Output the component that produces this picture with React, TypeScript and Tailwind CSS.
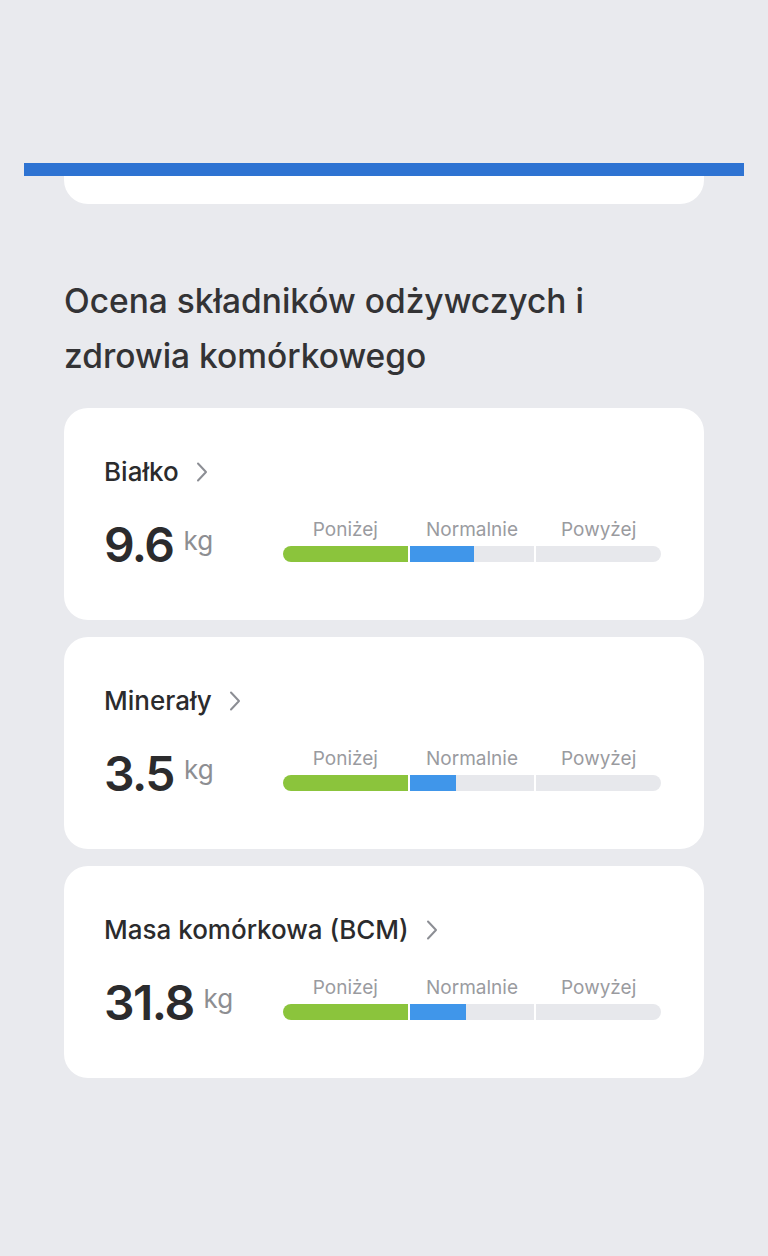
type Metric = {
  name: string;
  value: string;
  unit: string;
  fill: number; // share of the "normal" segment filled, 0-100
};

const metrics: Metric[] = [
  { name: "Białko", value: "9.6", unit: "kg", fill: 52 },
  { name: "Minerały", value: "3.5", unit: "kg", fill: 37 },
  { name: "Masa komórkowa (BCM)", value: "31.8", unit: "kg", fill: 45 },
];

function Chevron() {
  return (
    <svg width="12" height="20" viewBox="0 0 12 20" fill="none" className="shrink-0">
      <path
        d="M2 1.5 10 10 2 18.5"
        stroke="#8c8e94"
        strokeWidth="2"
        strokeLinecap="round"
        strokeLinejoin="round"
      />
    </svg>
  );
}

function RangeBar({ fill }: { fill: number }) {
  return (
    <div className="w-[378px] shrink-0">
      <div className="grid grid-cols-3 gap-[2px] text-center text-[19px] leading-6 text-[#9a9b9f]">
        <span>Poniżej</span>
        <span>Normalnie</span>
        <span>Powyżej</span>
      </div>
      <div className="mt-1 grid h-4 grid-cols-3 gap-[2px] overflow-hidden rounded-full">
        <div className="bg-[#8bc43c]" />
        <div className="bg-[#e7e8ec]">
          <div className="h-full bg-[#4096ea]" style={{ width: `${fill}%` }} />
        </div>
        <div className="bg-[#e7e8ec]" />
      </div>
    </div>
  );
}

function MetricCard({ metric }: { metric: Metric }) {
  return (
    <div className="rounded-[24px] bg-white pb-[50px] pl-10 pr-[43px] pt-12">
      <div className="flex h-8 items-center gap-[17px]">
        <span className="text-[26px] font-medium leading-8 text-[#2b2b2d]">
          {metric.name}
        </span>
        <Chevron />
      </div>
      <div className="mt-[30px] flex items-start justify-between">
        <div className="mt-[2px] flex items-start gap-[10px]">
          <span className="text-[48px] font-semibold leading-[50px] tracking-[-1.5px] text-[#2b2b2d]">
            {metric.value}
          </span>
          <span className="mt-[5px] text-[26px] leading-8 text-[#8d8e92]">{metric.unit}</span>
        </div>
        <RangeBar fill={metric.fill} />
      </div>
    </div>
  );
}

export default function App() {
  return (
    <div className="min-h-[1256px] bg-[#e9eaee] pt-[163px] font-['Inter','Noto_Sans',sans-serif]">
      {/* progress strip over the previous card */}
      <div className="mx-6 h-[13px] bg-[#2e73d2]" />
      <div className="mx-16 h-7 rounded-b-[24px] bg-white" />

      <div className="mx-16 mt-[70px]">
        <h2 className="text-[33.5px] font-medium leading-[55px] text-[#333335]">
          Ocena składników odżywczych i
          <br />
          zdrowia komórkowego
        </h2>

        <div className="mt-6 flex flex-col gap-[17px]">
          {metrics.map((m) => (
            <MetricCard key={m.name} metric={m} />
          ))}
        </div>
      </div>
    </div>
  );
}
